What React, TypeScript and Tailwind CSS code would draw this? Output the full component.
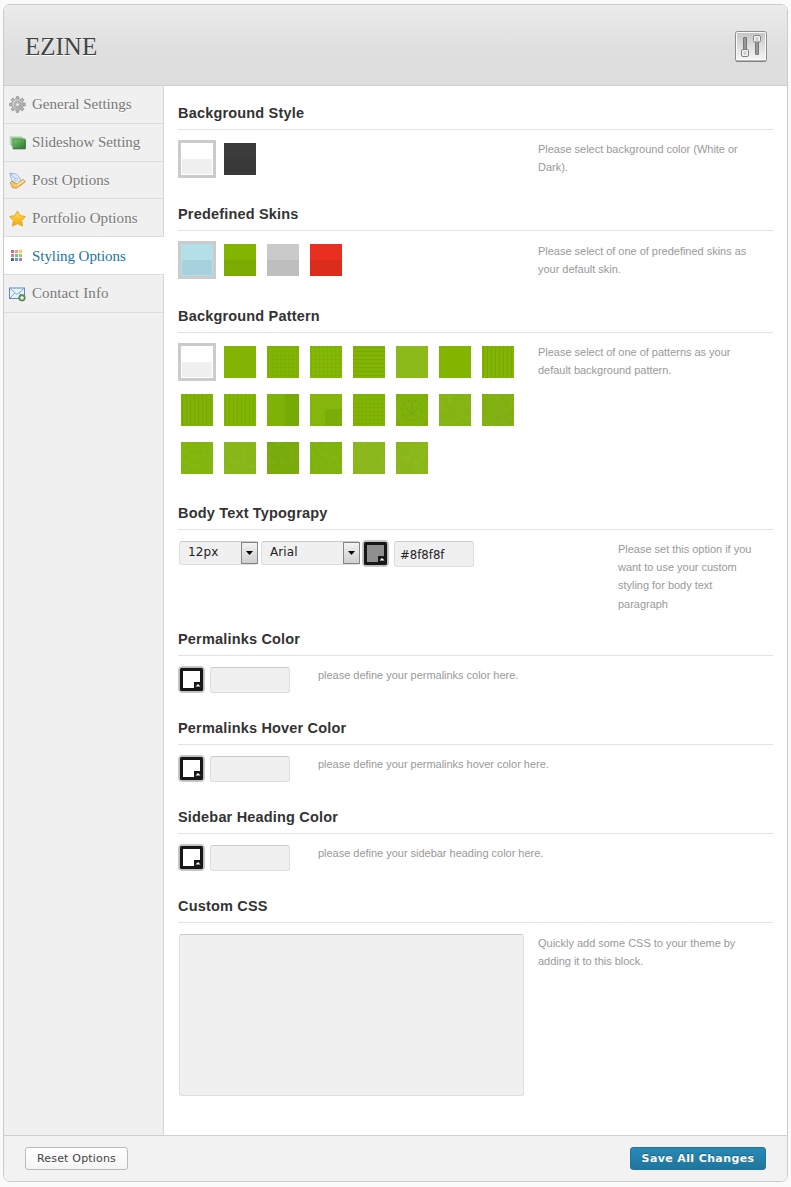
import type { ReactNode } from "react";

function GearIcon() {
  return (
    <svg width="17" height="17" viewBox="0 0 16 16">
      <defs>
        <linearGradient id="gear" x1="0" y1="0" x2="1" y2="1">
          <stop offset="0" stopColor="#eaeaea" />
          <stop offset="1" stopColor="#a5a5a5" />
        </linearGradient>
      </defs>
      {[0, 45, 90, 135].map((a) => (
        <rect key={a} x="6.7" y="0.5" width="2.6" height="15" rx=".8" fill="#b8b8b8" stroke="#808080" strokeWidth=".6" transform={`rotate(${a} 8 8)`} />
      ))}
      <circle cx="8" cy="8" r="5.2" fill="url(#gear)" stroke="#999" strokeWidth=".6" />
      <circle cx="8" cy="8" r="3.1" fill="#d2d2d2" stroke="#909090" strokeWidth=".7" />
      <circle cx="8" cy="8" r="1.7" fill="#f7f7f7" stroke="#888" strokeWidth=".7" />
    </svg>
  );
}

function SlidesIcon() {
  return (
    <svg width="17" height="16" viewBox="0 0 17 16">
      <defs>
        <linearGradient id="slide" x1="0" y1="0" x2="1" y2="1">
          <stop offset="0" stopColor="#80c274" />
          <stop offset="1" stopColor="#26802b" />
        </linearGradient>
      </defs>
      <rect x=".5" y="1" width="12" height="9" fill="#b9dcb5" opacity=".8" />
      <rect x="2" y="2.3" width="12" height="9" fill="#8ec888" />
      <rect x="4" y="4" width="12" height="9.5" fill="url(#slide)" stroke="#4c904c" strokeWidth=".8" />
      <path d="M4 13.8h12.3V5" fill="none" stroke="#3a5b3a" strokeWidth=".9" />
    </svg>
  );
}

function PostIcon() {
  return (
    <svg width="17" height="17" viewBox="0 0 16 16">
      <path d="M.8 1l6.4 1 4 5.5-3 4.5L2.6 8z" fill="#e2effa" stroke="#8fb8de" strokeWidth=".9" strokeLinejoin="round" />
      <path d="M1 1l4.6 5.3" stroke="#7ea9d2" strokeWidth=".8" />
      <path d="M1.2 9.8l1.6-1 4.7 2.6 6-4.4 1.8 2.3-8.2 6-3.9-.6z" fill="#f7c66c" stroke="#cb8a35" strokeWidth=".8" strokeLinejoin="round" />
      <path d="M7.6 12.5l6-4.3" stroke="#fff0b5" strokeWidth="1.1" />
      <circle cx="6.7" cy="7" r="1.4" fill="#fff" stroke="#78a5ce" strokeWidth=".7" />
    </svg>
  );
}

function StarIcon() {
  return (
    <svg width="17" height="17" viewBox="0 0 16 16">
      <defs>
        <linearGradient id="star" x1="0" y1="0" x2="0" y2="1">
          <stop offset="0" stopColor="#ffdf60" />
          <stop offset="1" stopColor="#f0a800" />
        </linearGradient>
      </defs>
      <path d="M8 .8l2.4 4.5 5.1.8-3.6 3.7.8 5.3L8 12.8l-4.7 2.3.8-5.3L.5 6.1l5.1-.8z" fill="url(#star)" stroke="#e2a62a" strokeWidth=".9" strokeLinejoin="round" />
    </svg>
  );
}

function PaletteIcon() {
  const colors = ["#e0677a", "#eda06d", "#edcb67", "#d873ab", "#65c887", "#9fc965", "#4a69a8", "#718fce", "#a778c4"];
  return (
    <svg width="16" height="16" viewBox="0 0 16 16">
      {colors.map((c, i) => (
        <rect key={c} x={2 + (i % 3) * 4} y={2 + Math.floor(i / 3) * 4} width="3" height="3" fill={c} />
      ))}
    </svg>
  );
}

function MailIcon() {
  return (
    <svg width="17" height="16" viewBox="0 0 17 16">
      <rect x=".5" y="2" width="15" height="10.5" fill="#e6f2fd" stroke="#6389b8" />
      <path d="M1 2.5l7 6 7-6M1 12l5-5M15 12l-5-5" fill="none" stroke="#7ba5d3" strokeWidth=".9" />
      <circle cx="13" cy="11.8" r="3.2" fill="#6b9f5c" stroke="#3f7040" strokeWidth=".8" />
      <path d="M13 9.9v3.8M11.1 11.8h3.8" stroke="#fff" strokeWidth="1.2" />
    </svg>
  );
}

function SlidersIcon() {
  return (
    <svg width="32" height="31" viewBox="0 0 32 31">
      <defs>
        <linearGradient id="panel" x1="0" y1="0" x2="0" y2="1">
          <stop offset="0" stopColor="#c6c6c6" />
          <stop offset="1" stopColor="#f4f4f4" />
        </linearGradient>
      </defs>
      <rect x=".5" y=".5" width="31" height="30" rx="2" fill="#fafafa" stroke="#8c8c8c" />
      <rect x="2" y="2" width="28" height="26" fill="url(#panel)" />
      <path d="M1 30h30" stroke="#777" strokeWidth="1.2" />
      <rect x="8.5" y="6.5" width="3" height="13" rx=".5" fill="#999" stroke="#777" />
      <rect x="20.5" y="10.5" width="3" height="13" rx=".5" fill="#999" stroke="#777" />
      <rect x="6.5" y="18.5" width="7" height="7" rx="1.5" fill="#f5f5f5" stroke="#808080" />
      <rect x="18.5" y="4.5" width="7" height="6.5" rx="1.5" fill="#f5f5f5" stroke="#808080" />
      <path d="M8.5 21h3M8.5 23h3M20.5 7h3M20.5 9h3" stroke="#aaa" />
    </svg>
  );
}

const menu: { label: string; icon: ReactNode; row: string; spacing: string }[] = [
  { label: "General Settings", icon: <GearIcon />, row: "h-[38px]", spacing: "tracking-[0px]" },
  { label: "Slideshow Setting", icon: <SlidesIcon />, row: "h-[38px]", spacing: "tracking-[-0.03px]" },
  { label: "Post Options", icon: <PostIcon />, row: "h-[37px]", spacing: "tracking-[0.05px]" },
  { label: "Portfolio Options", icon: <StarIcon />, row: "h-[38px] pt-px", spacing: "tracking-[0.06px]" },
  { label: "Styling Options", icon: <PaletteIcon />, row: "h-[38px] pt-px", spacing: "tracking-[-0.06px]" },
  { label: "Contact Info", icon: <MailIcon />, row: "h-[38px]", spacing: "tracking-[0.1px]" },
];

function Section({ title, height, children }: { title: string; height: string; children: ReactNode }) {
  return (
    <section className={height}>
      <h2 className="h-7 border-b border-[#e3e3e3] text-[14.5px] leading-[22px] font-bold tracking-[0.18px] text-[#333]">{title}</h2>
      <div className="flex items-start pt-[10px]">{children}</div>
    </section>
  );
}

function Note({ className, children }: { className: string; children: ReactNode }) {
  return <p className={`text-[11px] leading-[18.2px] tracking-[-0.02px] text-[#999] ${className}`}>{children}</p>;
}

function Swatch({ top, bottom, selected = false }: { top: string; bottom: string; selected?: boolean }) {
  return (
    <div className={`flex size-[38px] border-[3px] ${selected ? "border-[#cbcbcb]" : "border-white"}`}>
      <svg width="32" height="32" viewBox="0 0 32 32">
        <rect width="32" height="32" fill={top} />
        <rect x={selected ? 1 : 0} y="16" width={selected ? 30 : 32} height={selected ? 15 : 16} fill={bottom} />
      </svg>
    </div>
  );
}

type Pattern = { base: string; kind: "plain" | "grid" | "rows" | "cols" | "halves" | "quarter" | "flower" | "noise"; step?: number };

const patterns: Pattern[] = [
  { base: "#82b503", kind: "plain" },
  { base: "#82b503", kind: "grid", step: 4 },
  { base: "#84b804", kind: "grid", step: 4 },
  { base: "#82b503", kind: "rows", step: 4 },
  { base: "#8cba1b", kind: "plain" },
  { base: "#82b500", kind: "plain" },
  { base: "#82b503", kind: "cols", step: 4 },
  { base: "#80b303", kind: "cols", step: 4 },
  { base: "#82b603", kind: "cols", step: 4 },
  { base: "#7fb206", kind: "halves" },
  { base: "#84b60b", kind: "quarter" },
  { base: "#82b503", kind: "grid", step: 4 },
  { base: "#80b20a", kind: "flower" },
  { base: "#84b412", kind: "noise" },
  { base: "#80b00f", kind: "noise" },
  { base: "#82b50b", kind: "noise" },
  { base: "#87b716", kind: "noise" },
  { base: "#78aa0a", kind: "noise" },
  { base: "#7fb20b", kind: "noise" },
  { base: "#8ab71a", kind: "noise" },
  { base: "#8ab718", kind: "noise" },
];

function PatternSwatch({ pattern, index }: { pattern: Pattern; index: number }) {
  const step = pattern.step ?? 4;
  const stops = Array.from({ length: Math.ceil(32 / step) }, (_, i) => i * step + 1.5);
  const rows = pattern.kind === "grid" || pattern.kind === "rows";
  const cols = pattern.kind === "grid" || pattern.kind === "cols";
  const opacity = pattern.kind === "grid" ? 0.22 : 0.5;
  return (
    <div className="flex size-[38px] border-[3px] border-white">
      <svg width="32" height="32" viewBox="0 0 32 32">
        <rect width="32" height="32" fill={pattern.base} />
        {rows && stops.map((s) => <path key={`r${s}`} d={`M0 ${s}h32`} stroke="#6c9f08" opacity={opacity} />)}
        {cols && stops.map((s) => <path key={`c${s}`} d={`M${s} 0v32`} stroke="#6c9f08" opacity={opacity} />)}
        {pattern.kind === "halves" && <rect x="18" width="14" height="32" fill="#70a206" opacity=".5" />}
        {pattern.kind === "quarter" && <rect x="15" y="15" width="17" height="17" fill="#74a606" opacity=".6" />}
        {pattern.kind === "flower" && (
          <g fill="none" stroke="#6b9d1c" strokeWidth="1.5" opacity=".38">
            <circle cx="16" cy="16" r="10" strokeDasharray="4 2" />
            <path d="M10 13q6 12 12 0M16 7v16M11 22q5-5 10 0" />
            <path d="M0 5l5-5M27 0l5 5M0 27l5 5M32 27l-5 5" />
          </g>
        )}
        {pattern.kind === "noise" && (
          <>
            <filter id={`grain${index}`} x="0" y="0" width="1" height="1">
              <feTurbulence type="fractalNoise" baseFrequency=".22" numOctaves="2" seed={index} />
              <feColorMatrix values="0 0 0 0 .38  0 0 0 0 .56  0 0 0 0 .12  1.8 0 0 0 -.72" />
            </filter>
            <rect width="32" height="32" filter={`url(#grain${index})`} opacity=".2" />
          </>
        )}
      </svg>
    </div>
  );
}

function ColorPicker({ color }: { color: string }) {
  return (
    <svg className="shrink-0" width="27" height="27" viewBox="0 0 27 27">
      <rect x=".5" y=".5" width="26" height="26" rx="3.5" fill="#bcbcbc" stroke="#cbcbcb" />
      <rect x="2" y="2" width="23" height="23" rx="1.5" fill="#171717" />
      <path d="M5 5h17v11h-6v6H5z" fill={color} />
      <path d="M17.5 20.5L20 18l2.5 2.5z" fill="#fff" />
    </svg>
  );
}

function Select({ value, width }: { value: string; width: string }) {
  return (
    <div className={`flex h-6 items-stretch justify-between rounded-[3px] border border-[#dedede] border-t-[#c9c9c9] border-r-0 bg-[#f0f0f0] ${width}`}>
      <span className="pl-2 font-['DejaVu_Sans'] text-[12px] leading-[21px] tracking-[0.1px] text-[#222]">{value}</span>
      <span className="flex w-[17px] items-center justify-center border border-[#858585] bg-linear-to-b from-[#f3f3f3] to-[#cfcfcf]">
        <svg width="7" height="4" viewBox="0 0 7 4"><path d="M0 0h7L3.5 4z" fill="#000" /></svg>
      </span>
    </div>
  );
}

function ColorInput({ value = "" }: { value?: string }) {
  return (
    <div className="h-[26px] w-20 rounded-[3px] border border-[#dedede] border-t-[#cacaca] bg-[#f0f0f0] pl-[5px] font-['DejaVu_Sans'] text-[11.7px] leading-[26px] text-[#222]">{value}</div>
  );
}

function ColorSection({ title, note }: { title: string; note: string }) {
  return (
    <Section title={title} height="h-[89px]">
      <ColorPicker color="#fff" />
      <div className="mt-px ml-[5px]"><ColorInput /></div>
      <Note className="ml-7 whitespace-nowrap">{note}</Note>
    </Section>
  );
}

export default function App() {
  return (
    <div className="h-[1187px] w-[791px] bg-[#fafafa] pt-1 pl-[3px] font-['Liberation_Sans',sans-serif]">
      <div className="flex h-[1178px] w-[785px] flex-col overflow-hidden rounded-[7px] border border-[#cbcbcb] bg-white">
        <header className="flex h-[81px] shrink-0 items-center justify-between border-b border-[#cfcfcf] bg-linear-to-b from-[#ebebeb] to-[#dedede] to-60% pr-5 pl-[21px]">
          <h1 className="pt-[3px] font-['Liberation_Serif',serif] text-[25px] tracking-[0px] text-[#444] [text-shadow:0_1px_0_#fff]">EZINE</h1>
          <div className="pt-[2px]"><SlidersIcon /></div>
        </header>
        <div className="flex h-[1049px] shrink-0">
          <nav className="w-40 shrink-0 border-r border-[#d6d6d6] bg-[#f0f0f0]">
            {menu.map((m) => {
              const active = m.label === "Styling Options";
              return (
                <div key={m.label} className={`flex items-center border-b border-[#dcdcdc] pl-[5px] font-['Liberation_Serif',serif] text-[15px] whitespace-nowrap ${m.row} ${m.spacing} ${active ? "-mr-px bg-white text-[#21759b]" : "text-[#777] [text-shadow:0_1px_0_#fff]"}`}>
                  <span className="w-[23px] shrink-0">{m.icon}</span>
                  <span>{m.label}</span>
                </div>
              );
            })}
          </nav>
          <main className="w-[609px] pt-4 pl-[14px]">
            <Section title="Background Style" height="h-[101px]">
              <div className="flex w-[360px] gap-[5px]">
                <Swatch top="#fff" bottom="#f0f0f0" selected />
                <Swatch top="#3b3b3b" bottom="#383838" />
              </div>
              <Note className="w-[220px]">Please select background color (White or<br />Dark).</Note>
            </Section>
            <Section title="Predefined Skins" height="h-[102px]">
              <div className="flex w-[360px] gap-[5px]">
                <Swatch top="#b3dfe8" bottom="#a7d2dd" selected />
                <Swatch top="#82b500" bottom="#7aab00" />
                <Swatch top="#cacaca" bottom="#bebebe" />
                <Swatch top="#e92f20" bottom="#db2c1c" />
              </div>
              <Note className="w-[230px] pt-px">Please select of one of predefined skins as<br />your default skin.</Note>
            </Section>
            <Section title="Background Pattern" height="h-[197px]">
              <div className="flex w-[360px] flex-wrap gap-x-[5px] gap-y-[10px]">
                <Swatch top="#fff" bottom="#f0f0f0" selected />
                {patterns.map((p, i) => <PatternSwatch key={i} pattern={p} index={i} />)}
              </div>
              <Note className="w-[220px]">Please select of one of patterns as your<br />default background pattern.</Note>
            </Section>
            <Section title="Body Text Typograpy" height="h-[126px]">
              <div className="flex w-[440px] items-start pl-px">
                <div className="mt-px mr-[3px]"><Select value="12px" width="w-[79px]" /></div>
                <div className="mt-px mr-[2px]"><Select value="Arial" width="w-[99px]" /></div>
                <ColorPicker color="#8f8f8f" />
                <div className="mt-px ml-[5px]"><ColorInput value="#8f8f8f" /></div>
              </div>
              <Note className="w-[155px]">Please set this option if you<br />want to use your custom<br />styling for body text<br />paragraph</Note>
            </Section>
            <ColorSection title="Permalinks Color" note="please define your permalinks color here." />
            <ColorSection title="Permalinks Hover Color" note="please define your permalinks hover color here." />
            <ColorSection title="Sidebar Heading Color" note="please define your sidebar heading color here." />
            <Section title="Custom CSS" height="h-[212px]">
              <div className="mt-px mr-[14px] ml-px h-[162px] w-[345px] rounded-[3px] border border-[#dedede] border-t-[#cacaca] bg-[#f0f0f0]" />
              <Note className="w-[220px] pt-px">Quickly add some CSS to your theme by<br />adding it to this block.</Note>
            </Section>
          </main>
        </div>
        <footer className="flex flex-1 items-center justify-between border-t border-[#cfcfcf] bg-[#f2f2f2] pr-[21px] pl-[21px] font-['DejaVu_Sans',sans-serif]">
          <button className="h-[23px] w-[103px] rounded-[3px] border border-[#bbb] bg-linear-to-b from-white to-[#f4f4f4] pt-[2px] text-[11px] tracking-[0.18px] text-[#444]">Reset Options</button>
          <button className="h-[23px] w-[136px] rounded-[3px] border border-[#21759b] bg-linear-to-b from-[#278ab7] to-[#21759b] pt-[2px] text-[11px] font-bold tracking-[0.38px] text-white [text-shadow:0_-1px_0_rgba(0,0,0,0.3)]">Save All Changes</button>
        </footer>
      </div>
    </div>
  );
}
